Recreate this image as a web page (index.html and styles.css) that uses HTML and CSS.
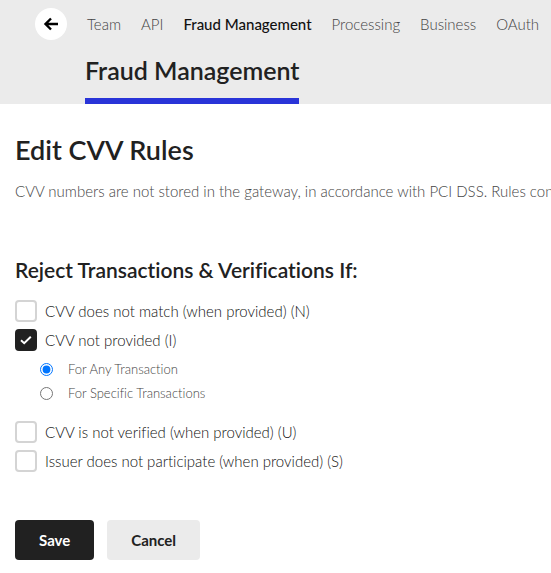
FILE: index.html
```html
<!DOCTYPE html>
<html lang="en">
<head>
    <meta charset="UTF-8">
    <meta name="viewport" content="width=device-width, initial-scale=1.0">
    <title>Edit CVV Rules</title>
    <link rel="stylesheet" href="styles.css">
</head>
<body>

<header class="header">
    <nav class="nav">
        <a class="back" href="#" aria-label="Back">
            <svg width="16" height="16" viewBox="0 0 16 16" fill="none" stroke="#000" stroke-width="2.4">
                <path d="M15 8H3M8 2.5L2.5 8L8 13.5"/>
            </svg>
        </a>
        <a href="#">Team</a>
        <a href="#">API</a>
        <a class="active" href="#">Fraud Management</a>
        <a href="#">Processing</a>
        <a href="#">Business</a>
        <a href="#">OAuth</a>
    </nav>
    <a class="tab" href="#">Fraud Management</a>
</header>

<main class="content">
    <h1>Edit CVV Rules</h1>
    <p class="intro">CVV numbers are not stored in the gateway, in accordance with PCI DSS. Rules configured</p>

    <form>
        <h2>Reject Transactions &amp; Verifications If:</h2>
        <label class="check"><input type="checkbox" name="n">CVV does not match (when provided) (N)</label>
        <label class="check"><input type="checkbox" name="i" checked>CVV not provided (I)</label>
        <div class="radios">
            <label><input type="radio" name="scope" value="any" checked>For Any Transaction</label>
            <label><input type="radio" name="scope" value="specific">For Specific Transactions</label>
        </div>
        <label class="check"><input type="checkbox" name="u">CVV is not verified (when provided) (U)</label>
        <label class="check"><input type="checkbox" name="s">Issuer does not participate (when provided) (S)</label>

        <div class="buttons">
            <button class="save" type="button">Save</button>
            <button class="cancel" type="button">Cancel</button>
        </div>
    </form>
</main>

</body>
</html>
```

FILE: styles.css
```css
* {
    box-sizing: border-box;
}
body {
    margin: 0;
    font-family: Lato, "Open Sans", sans-serif;
    font-size: 15px;
    font-weight: 300;
    font-variant-ligatures: none;
    line-height: 20px;
    color: #212121;
    background-color: #fff;
}
a {
    color: inherit;
    text-decoration: none;
}
.header {
    background-color: #ebebeb;
    padding: 8px 0 0 35px;
}
.nav {
    display: flex;
    align-items: center;
    gap: 20px;
    white-space: nowrap;
    color: #444;
}
.nav .active {
    color: #111;
    font-weight: 500;
}
.back {
    display: flex;
    align-items: center;
    justify-content: center;
    width: 32px;
    height: 32px;
    border-radius: 50%;
    background-color: #fff;
}
.tab {
    display: block;
    width: fit-content;
    margin-left: 50px;
    padding: 14px 0 11px;
    border-bottom: 6px solid #2934d8;
    font-size: 25px;
    line-height: 33px;
    font-weight: 600;
}
.content {
    padding: 30px 15px 13px;
    overflow: hidden;
}
h1 {
    margin: 0;
    font-size: 27px;
    line-height: 32px;
    font-weight: 600;
}
.intro {
    margin: 15px 0 56px;
    white-space: nowrap;
    color: #444;
}
h2 {
    margin: 0 0 17px;
    font-size: 21px;
    line-height: 26px;
    font-weight: 600;
}
.check {
    display: flex;
    align-items: center;
    gap: 8px;
    width: fit-content;
    min-height: 22px;
    margin-bottom: 7px;
    color: #111;
}
.check input {
    appearance: none;
    width: 22px;
    height: 22px;
    margin: 0;
    border: 2px solid #d4d4d4;
    border-radius: 4px;
    background-color: #fff;
}
.check input:checked {
    border-color: #212121;
    background: #212121 url("data:image/svg+xml,%3Csvg xmlns='http://www.w3.org/2000/svg' viewBox='0 0 18 18' fill='none' stroke='white' stroke-width='2'%3E%3Cpath d='M4 9.2L7.2 12.2L13.8 5.8'/%3E%3C/svg%3E") center / 18px no-repeat;
}
.radios {
    display: flex;
    flex-direction: column;
    gap: 4px;
    margin-bottom: 18px;
    padding: 1px 0 0 25px;
    font-size: 13px;
    color: #444;
}
.radios label {
    display: flex;
    align-items: center;
    gap: 15px;
    width: fit-content;
}
.radios input {
    width: 13px;
    height: 13px;
    margin: 0;
}
.buttons {
    display: flex;
    gap: 13px;
    margin-top: 48px;
}
button {
    height: 40px;
    padding: 0 24px;
    border: 0;
    border-radius: 4px;
    font: inherit;
    font-weight: 700;
    cursor: pointer;
}
.save {
    background-color: #212121;
    color: #fff;
}
.cancel {
    background-color: #ebebeb;
    color: #212121;
}
```
